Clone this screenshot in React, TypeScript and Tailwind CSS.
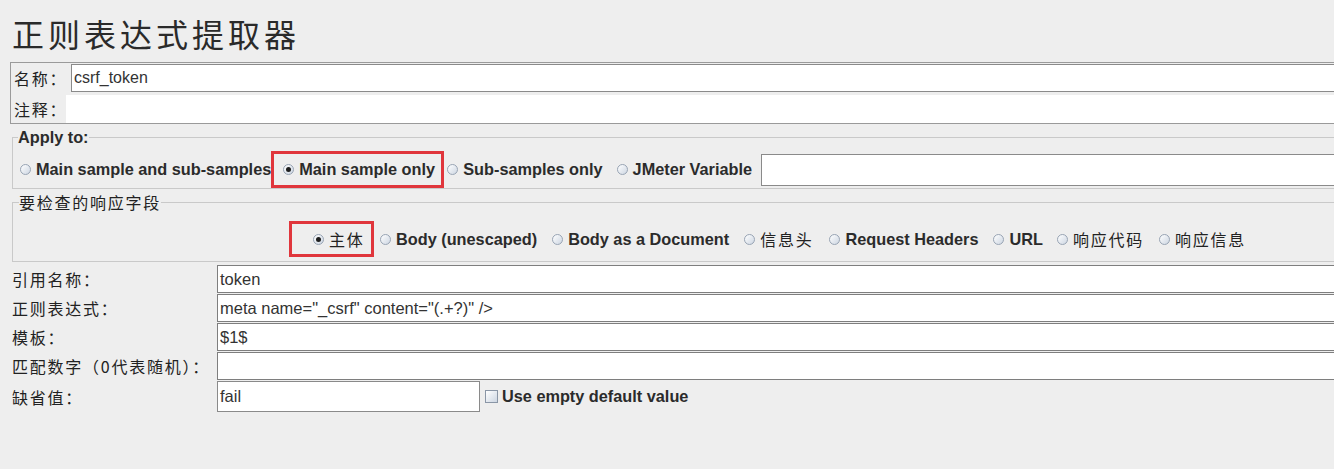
import React from "react";

const cjk = '"Noto Sans CJK SC", "Liberation Sans", sans-serif';

function Radio({ checked = false }: { checked?: boolean }) {
  return (
    <span className="flex h-[11px] w-[11px] shrink-0 items-center justify-center rounded-full border border-[#98a4b4] bg-gradient-to-br from-white to-[#cdd6e2]">
      {checked && <span className="h-[5px] w-[5px] rounded-full bg-[#1e1e1e]" />}
    </span>
  );
}

function Option({
  label,
  checked,
  cn,
  className = "",
}: {
  label: string;
  checked?: boolean;
  cn?: boolean;
  className?: string;
}) {
  return (
    <span className={`flex shrink-0 items-center gap-[5px] whitespace-nowrap ${className}`}>
      <Radio checked={checked} />
      <span
        className={
          cn
            ? "text-[16px] tracking-[1.75px] text-[#222]"
            : "text-[16.3px] font-bold text-[#2b2b2b]"
        }
        style={cn ? { fontFamily: cjk } : undefined}
      >
        {label}
      </span>
    </span>
  );
}

const rows = [
  { label: "引用名称：", value: "token" },
  { label: "正则表达式：", value: 'meta name="_csrf" content="(.+?)" />' },
  { label: "模板：", value: "$1$" },
  { label: "匹配数字（0代表随机）：", value: "" },
];

const labelCls = "shrink-0 whitespace-nowrap text-[16px] tracking-[1.75px]";

export default function App() {
  return (
    <div
      className="h-[469px] w-[1334px] overflow-hidden bg-[#eeeeee] text-[#222]"
      style={{ fontFamily: '"Liberation Sans", Arial, sans-serif' }}
    >
      <h1
        className="whitespace-nowrap pl-[12px] pt-[12px] text-[32px] leading-[42px] tracking-[4px] text-[#2a2a2a]"
        style={{ fontFamily: cjk }}
      >
        正则表达式提取器
      </h1>

      <div className="ml-[10px] mt-[8px] border border-r-0 border-[#9a9a9a] pt-[1px]">
        <div className="flex h-[28px] items-center">
          <span className={`w-[60px] pl-[3px] ${labelCls}`} style={{ fontFamily: cjk }}>
            名称：
          </span>
          <div className="flex h-[28px] flex-1 items-center border border-r-0 border-[#8a8a8a] bg-white pl-[2px] text-[16px] text-[#333]">
            csrf_token
          </div>
        </div>
        <div className="mt-[2px] flex h-[29px] items-center">
          <span className={`w-[55px] overflow-visible pl-[3px] ${labelCls}`} style={{ fontFamily: cjk }}>
            注释：
          </span>
          <div className="h-[28px] flex-1 bg-white" />
        </div>
      </div>

      <fieldset className="ml-[12px] mt-[4px] border border-r-0 border-[#c9c9c9]">
        <legend className="ml-[5px] whitespace-nowrap text-[16.3px] font-bold leading-[18px] text-[#2b2b2b]">
          Apply to:
        </legend>
        <div className="mt-[5px] flex h-[37px] items-center pl-[7px]">
          <Option label="Main sample and sub-samples" />
          <span className="flex h-[37px] w-[173px] shrink-0 items-center border-[3px] border-[#e0363c] pl-[9px]">
            <Option label="Main sample only" checked />
          </span>
          <Option label="Sub-samples only" className="ml-[3px]" />
          <Option label="JMeter Variable" className="ml-[14px]" />
          <div className="ml-[9px] h-[32px] flex-1 border border-r-0 border-[#8a8a8a] bg-white" />
        </div>
      </fieldset>

      <fieldset className="ml-[12px] mt-[4px] border border-r-0 border-[#c9c9c9]">
        <legend
          className="ml-[6px] whitespace-nowrap text-[16px] leading-[18px] tracking-[1.75px] text-[#222]"
          style={{ fontFamily: cjk }}
        >
          要检查的响应字段
        </legend>
        <div className="mb-[4px] mt-[10px] flex h-[36px] items-center pl-[276px]">
          <span className="flex h-[36px] w-[85px] shrink-0 items-center border-[3px] border-[#e0363c] pl-[21px]">
            <Option label="主体" checked cn />
          </span>
          <Option label="Body (unescaped)" className="ml-[6px]" />
          <Option label="Body as a Document" className="ml-[15px]" />
          <Option label="信息头" cn className="ml-[15px]" />
          <Option label="Request Headers" className="ml-[16px]" />
          <Option label="URL" className="ml-[15px]" />
          <Option label="响应代码" cn className="ml-[14px]" />
          <Option label="响应信息" cn className="ml-[15px]" />
        </div>
      </fieldset>

      <div className="mt-[3px] flex flex-col gap-[1px]">
        {rows.map((r) => (
          <div key={r.label} className="flex h-[28px] items-center">
            <span className={`w-[217px] pl-[12px] ${labelCls}`} style={{ fontFamily: cjk }}>
              {r.label}
            </span>
            <div className="flex h-[28px] flex-1 items-center whitespace-nowrap border border-r-0 border-[#7e7e7e] bg-white pl-[2px] text-[16.5px] text-[#333]">
              {r.value}
            </div>
          </div>
        ))}
        <div className="flex h-[31px] items-center">
          <span className={`w-[217px] pl-[12px] ${labelCls}`} style={{ fontFamily: cjk }}>
            缺省值：
          </span>
          <div className="flex h-[31px] w-[263px] shrink-0 items-center border border-[#8a8a8a] bg-white pl-[2px] text-[16.5px] text-[#333]">
            fail
          </div>
          <span className="ml-[5px] h-[13px] w-[13px] shrink-0 border border-[#8a96a6] bg-gradient-to-br from-white to-[#cdd6e2]" />
          <span className="ml-[4px] whitespace-nowrap text-[16.3px] font-bold text-[#2b2b2b]">
            Use empty default value
          </span>
        </div>
      </div>
    </div>
  );
}
